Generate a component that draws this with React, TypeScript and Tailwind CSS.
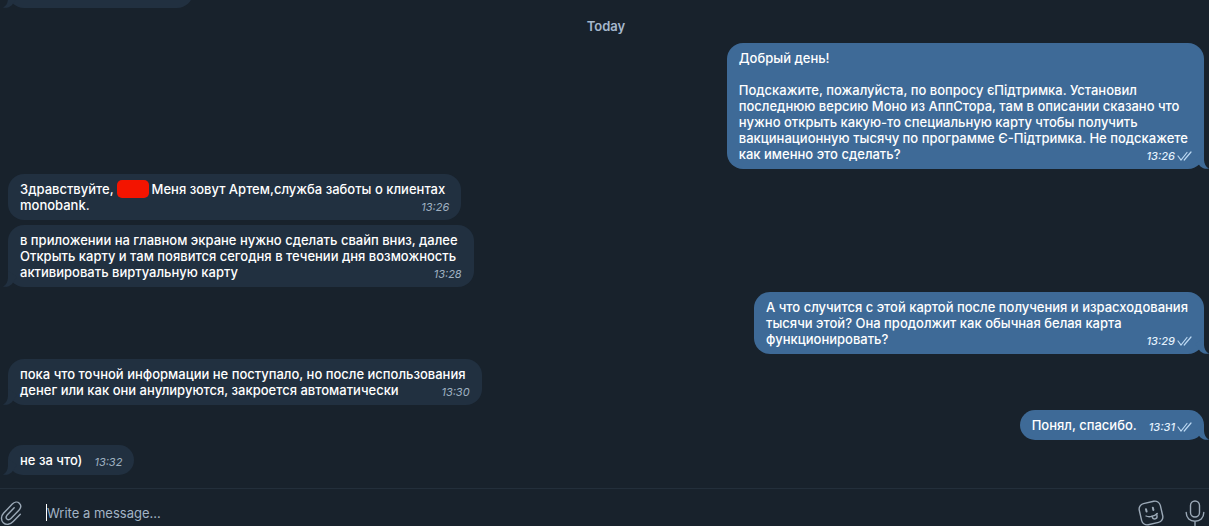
import type React from "react"
import { clsx } from "clsx"

interface Message {
  id: number
  own?: boolean
  tail?: boolean
  time: string
  lines: React.ReactNode[]
}

const messages: Message[] = [
  {
    id: 1,
    own: true,
    tail: true,
    time: "13:26",
    lines: [
      "Добрый день!",
      "",
      "Подскажите, пожалуйста, по вопросу єПідтримка. Установил",
      "последнюю версию Моно из АппСтора, там в описании сказано что",
      "нужно открыть какую-то специальную карту чтобы получить",
      "вакцинационную тысячу по программе Є-Підтримка. Не подскажете",
      "как именно это сделать?",
    ],
  },
  {
    id: 2,
    time: "13:26",
    lines: [
      <span key="greeting" className="flex items-center gap-[3px]">
        <span>Здравствуйте,</span>
        <span className="-my-px h-[18px] w-8 rounded-[5px] bg-[#f31400]" />
        <span>Меня зовут Артем,служба заботы о клиентах</span>
      </span>,
      "monobank.",
    ],
  },
  {
    id: 3,
    tail: true,
    time: "13:28",
    lines: [
      "в приложении на главном экране нужно сделать свайп вниз, далее",
      "Открыть карту и там появится сегодня в течении дня возможность",
      "активировать виртуальную карту",
    ],
  },
  {
    id: 4,
    own: true,
    tail: true,
    time: "13:29",
    lines: [
      "А что случится с этой картой после получения и израсходования",
      "тысячи этой? Она продолжит как обычная белая карта",
      "функционировать?",
    ],
  },
  {
    id: 5,
    tail: true,
    time: "13:30",
    lines: [
      "пока что точной информации не поступало, но после использования",
      "денег или как они анулируются, закроется автоматически",
    ],
  },
  { id: 6, own: true, tail: true, time: "13:31", lines: ["Понял, спасибо."] },
  { id: 7, tail: true, time: "13:32", lines: ["не за что)"] },
]

const Tail = ({ own }: { own?: boolean }) => (
  <svg
    viewBox="0 0 18 16"
    className={clsx(
      "absolute bottom-0 h-4 w-[18px]",
      own ? "-right-[5px] fill-[#3e6a97]" : "-left-[5px] -scale-x-100 fill-[#213040]",
    )}
    aria-hidden="true"
  >
    <path d="M13 0V7C13.2 11 15 14.2 18 15.6C14.6 16.2 11.4 15.2 9.2 13.2L4 6Z" />
  </svg>
)

const ReadMark = () => (
  <svg viewBox="0 0 15 10" className="mt-0.5 h-[10px] w-[15px] fill-none stroke-[#bcd8f2]" strokeWidth="1.2" strokeLinecap="round" aria-label="Read">
    <path d="M1 5L4 9L10 1.5M7.2 9L14 1" />
  </svg>
)

const Bubble = ({ message }: { message: Message }) => {
  const { own, tail, time, lines } = message
  const last = lines.length - 1

  return (
    <div
      className={clsx(
        "relative rounded-[16px] px-3 py-[7px] text-[13px] leading-4 font-medium whitespace-nowrap text-white",
        own ? "self-end bg-[#3e6a97]" : "self-start bg-[#213040]",
      )}
    >
      {tail && <Tail own={own} />}
      {lines.slice(0, last).map((line, i) => (
        <p key={i} className="min-h-4 pr-1">
          {line}
        </p>
      ))}
      {/* The last line shares its row with the time */}
      <div className="relative flex h-4 justify-between gap-3">
        <p>{lines[last]}</p>
        <span
          className={clsx(
            "flex gap-0.5 pt-[3px] text-[11px] leading-[14px] italic",
            own ? "text-[#e3f0fc]" : "font-normal text-[#9fb0c1]",
          )}
        >
          <time>{time}</time>
          {own && <ReadMark />}
        </span>
      </div>
    </div>
  )
}

const AttachIcon = () => (
  <svg viewBox="0 0 22 26" className="h-[26px] w-[22px] fill-none stroke-current" strokeWidth="1.4" strokeLinecap="round" strokeLinejoin="round">
    <path d="M20.3 14.2L13.2 21.6C10.3 24.6 6 25.4 3.3 22.7C0.6 20 1.1 15.9 3.7 13.1L12.3 4.1C14.4 1.9 17.4 1.4 19.3 3.2C21.3 5.1 20.9 8 18.9 10.2L10.9 18.5C9.6 19.8 8 20 6.9 19C5.8 17.9 6 16.3 7.2 15L14.2 7.7" />
  </svg>
)

const StickerIcon = () => (
  <svg viewBox="0 0 28 28" className="size-7 fill-none stroke-current" strokeWidth="1.4" strokeLinecap="round" strokeLinejoin="round">
    <g transform="rotate(-13 14 14)">
      <rect x="3.2" y="3.2" width="21.6" height="21.6" rx="5.5" />
      <path d="M10 9.2V11.6M17 9.2V11.6" strokeWidth="2" />
      <path d="M8.5 15.8C11 18 16.5 18.1 20 15.8" />
      <path d="M14.3 17.3V18.2C14.3 21.4 19.2 21.4 19.2 18.2V16.3" />
    </g>
  </svg>
)

const MicIcon = () => (
  <svg viewBox="0 0 20 28" className="h-7 w-5 fill-none stroke-current" strokeWidth="1.4" strokeLinecap="round">
    <rect x="5.5" y="2" width="9" height="16" rx="4.5" />
    <path d="M1.2 13.5C1.2 19 5 22.2 10 22.2C15 22.2 18.8 19 18.8 13.5M10 22.2V26.5" />
  </svg>
)

export default function App() {
  return (
    <div className="flex h-screen flex-col overflow-hidden bg-[#18222c] font-['Inter','Liberation_Sans',sans-serif]">
      <main className="flex shrink-0 flex-col pr-[5px] pb-[13px] pl-2">
        {/* End of the previous day's message */}
        <div className="flex h-2 w-[185px] flex-col justify-end">
          <div className="relative h-8 shrink-0 rounded-[16px] bg-[#213040]">
            <Tail />
          </div>
        </div>

        <h2 className="pt-[10px] pb-2 text-center text-[13px] leading-[17px] font-semibold text-[#a5b8cc]">Today</h2>

        <section className="flex flex-col gap-[5px]">
          {messages.map((message) => (
            <Bubble key={message.id} message={message} />
          ))}
        </section>
      </main>

      <footer className="flex h-12 shrink-0 items-center border-t border-[#232f3b] pr-1 text-[#9ba9b7]">
        <button type="button" aria-label="Attach file">
          <AttachIcon />
        </button>
        <div className="ml-6 h-[17px] w-px bg-white" />
        <input
          type="text"
          aria-label="Message"
          placeholder="Write a message..."
          className="min-w-0 flex-1 bg-transparent pt-0.5 text-[13px] text-white outline-none placeholder:text-[#a3b4c5]"
        />
        <button type="button" aria-label="Stickers">
          <StickerIcon />
        </button>
        <button type="button" aria-label="Record voice message" className="ml-5">
          <MicIcon />
        </button>
      </footer>
    </div>
  )
}
